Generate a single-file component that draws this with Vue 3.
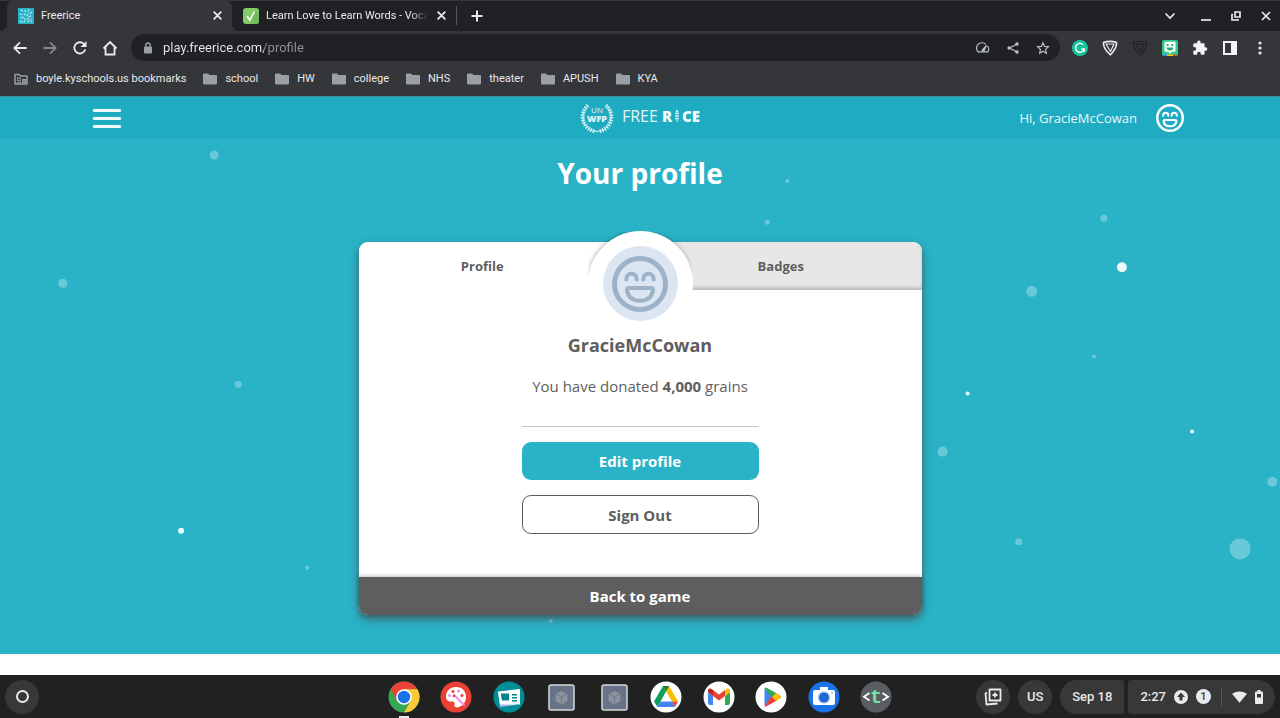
<template>
  <div class="desktop">
    <div class="tabstrip">
      <div class="tab active">
        <svg class="favicon" viewBox="0 0 16 16">
          <rect width="16" height="16" fill="#27b0c6" />
          <g stroke="#d6f3f7" stroke-width="1.1" stroke-linecap="round" opacity=".85">
            <path d="M3 2l1.500 1M7 2l.5 2M11 1.500l-1 2M14 4l-2 1.500M2 6l2 .5M6 6l1.500 1M10 6l-1 2M13 8l-2 .5M3 10l2-1M6 10l1 1.500M9 11l1.500-1M13 11l-1 1M2 13l2 1M6 14l1-1M10 14l.5-1.500M14 14l-1-.5" />
          </g>
        </svg>
        <span class="tab-title">Freerice</span>
        <button class="close" type="button" aria-label="Close tab">
          <svg viewBox="0 0 10 10"><path d="M1.500 1.500l7 7M8.500 1.500l-7 7" /></svg>
        </button>
      </div>
      <div class="tab">
        <svg class="favicon" viewBox="0 0 16 16">
          <rect width="16" height="16" rx="3" fill="#83c967" />
          <path d="M8 16h5a3 3 0 0 0 3-3V5l-4-2z" fill="#74b95b" />
          <path d="M4 8l2.800 4L11.500 3.500" fill="none" stroke="#fff" stroke-width="1.500" />
        </svg>
        <span class="tab-title faded">Learn Love to Learn Words - Voca</span>
        <button class="close" type="button" aria-label="Close tab">
          <svg viewBox="0 0 10 10"><path d="M1.500 1.500l7 7M8.500 1.500l-7 7" /></svg>
        </button>
      </div>
      <span class="tab-divider"></span>
      <button class="new-tab" type="button" aria-label="New tab">
        <svg viewBox="0 0 12 12"><path d="M6 .5v11M.5 6h11" /></svg>
      </button>
      <div class="window-controls">
        <button type="button" aria-label="Search tabs">
          <svg viewBox="0 0 16 16"><path d="M3.500 5.500L8 10l4.500-4.500" /></svg>
        </button>
        <button type="button" aria-label="Minimize">
          <svg viewBox="0 0 16 16"><path d="M3 12h10" /></svg>
        </button>
        <button type="button" aria-label="Restore">
          <svg viewBox="0 0 16 16"><path d="M7 4h5v5H7zM5 6.500H4V12h6v-1" /></svg>
        </button>
        <button type="button" aria-label="Close">
          <svg viewBox="0 0 16 16"><path d="M4 4l8 8M12 4l-8 8" /></svg>
        </button>
      </div>
    </div>

    <div class="toolbar">
      <button type="button" aria-label="Back">
        <svg viewBox="0 0 16 16"><path d="M14.500 8H2.500M8 2.300L2.300 8 8 13.700" /></svg>
      </button>
      <button type="button" aria-label="Forward" class="dim">
        <svg viewBox="0 0 16 16"><path d="M1.500 8h12M8 2.300L13.700 8 8 13.700" /></svg>
      </button>
      <button type="button" aria-label="Reload">
        <svg viewBox="0 0 16 16"><path d="M13.300 9.500A5.600 5.600 0 1 1 12 4l1.500 1.500" /><path d="M14.500 1v6h-6z" fill="#e8eaed" stroke="none" /></svg>
      </button>
      <button type="button" aria-label="Home">
        <svg viewBox="0 0 16 16"><path d="M1.500 8.500L8 2l6.500 6.500M3.500 7v7.500h9V7" /></svg>
      </button>
      <div class="omnibox">
        <svg class="lock" viewBox="0 0 10 12">
          <rect x="1" y="4.500" width="8" height="7" rx="1" fill="#9aa0a6" />
          <path d="M2.800 5V3.200a2.200 2.200 0 0 1 4.400 0V5" fill="none" stroke="#9aa0a6" stroke-width="1.300" />
        </svg>
        <input v-model="address" class="url" type="text" aria-label="Address" spellcheck="false" />
        <button type="button" aria-label="Performance">
          <svg viewBox="0 0 16 16"><path d="M13 5.500a6 6 0 0 1 .5 7H2.500A6 6 0 0 1 11 3.700" /><path d="M7 10.500l5-5.500-3 6.500z" fill="#bdc1c6" /></svg>
        </button>
        <button type="button" aria-label="Share">
          <svg viewBox="0 0 16 16"><path d="M12.500 3.300L4 8l8.500 4.700" /><g fill="#bdc1c6" stroke="none"><circle cx="12.500" cy="3.300" r="2" /><circle cx="3.600" cy="8" r="2" /><circle cx="12.500" cy="12.700" r="2" /></g></svg>
        </button>
        <button type="button" aria-label="Bookmark this tab">
          <svg viewBox="0 0 16 16"><path d="M8 2l1.800 4.200 4.500.4-3.400 3 1 4.400L8 11.700 4.100 14l1-4.400-3.400-3 4.500-.4z" /></svg>
        </button>
      </div>
      <button type="button" aria-label="Grammar">
        <svg viewBox="0 0 16 16"><circle cx="8" cy="8" r="8" fill="#15c39a" stroke="none" /><path d="M11 4.600A4.400 4.400 0 1 0 12.200 9H9.200M12.200 8.500v3.300" stroke="#fff" stroke-width="1.400" /></svg>
      </button>
      <button type="button" aria-label="Shield">
        <svg viewBox="0 0 16 16"><path d="M1.500 2.500Q8 .3 14.500 2.500 15 8 8.500 14.800 1 9 1.500 2.500z" stroke-width="1.600" stroke-linejoin="round" /><path d="M4 4h8L8.500 11.500z" stroke-width="1.200" stroke-linejoin="round" /></svg>
      </button>
      <button type="button" aria-label="Shield, off" class="dark">
        <svg viewBox="0 0 16 16"><path d="M1.500 2.500Q8 .3 14.500 2.500 15 8 8.500 14.800 1 9 1.500 2.500z" stroke-width="1.300" stroke-linejoin="round" /><path d="M4 4h8L8.500 11.500z" stroke-width="1.200" stroke-linejoin="round" /></svg>
      </button>
      <button type="button" aria-label="Sticker chat">
        <svg viewBox="0 0 16 16">
          <g stroke="none">
            <rect width="16" height="16" rx="2" fill="#2fc98d" />
            <path d="M1 14.500h4V16H2z" fill="#4285f4" />
            <path d="M5 14.500h6V16H5z" fill="#fbbc04" />
            <path d="M11 14.500h4L14 16h-3z" fill="#ea4335" />
            <path d="M3.500 1.800h9q1 0 1 1v8q0 1-1 1h-3L8 14l-1.500-2.200h-3q-1 0-1-1v-8q0-1 1-1z" fill="#fff" />
            <path d="M4.800 4h1.700v2H4.800zM9.500 4h1.700v2H9.500zM4.500 7.500h7Q11 10.500 8 10.500T4.500 7.500z" fill="#22a873" />
          </g>
        </svg>
      </button>
      <button type="button" aria-label="Extensions">
        <svg viewBox="0 0 16 16"><path d="M13.600 7.300h-1V4.600c0-.8-.6-1.300-1.300-1.300H8.600v-1a1.700 1.700 0 0 0-3.400 0v1H2.600c-.8 0-1.300.6-1.300 1.300v2.500h1a1.800 1.800 0 0 1 0 3.700h-1v2.600c0 .7.600 1.300 1.300 1.300h2.500v-1a1.800 1.800 0 0 1 3.700 0v1h2.500c.7 0 1.300-.6 1.300-1.300v-2.700h1a1.700 1.700 0 0 0 0-3.400z" fill="#f1f3f4" stroke="none" /></svg>
      </button>
      <button type="button" aria-label="Side panel">
        <svg viewBox="0 0 16 16"><path d="M1 1h14v14H1zM3 3v10h6V3z" fill="#f1f3f4" fill-rule="evenodd" stroke="none" /></svg>
      </button>
      <button type="button" aria-label="Menu">
        <svg viewBox="0 0 16 16"><g fill="#e8eaed" stroke="none"><circle cx="8" cy="3" r="1.600" /><circle cx="8" cy="8" r="1.600" /><circle cx="8" cy="13" r="1.600" /></g></svg>
      </button>
    </div>

    <nav class="bookmarks" aria-label="Bookmarks">
      <a v-for="(name, i) in bookmarks" :key="name" href="#">
        <svg viewBox="0 0 14 12">
          <template v-if="i === 0">
            <path d="M1 1.500h4l1.500 1.500H13v8H1z" fill="none" stroke="#9aa0a6" stroke-width="1.500" stroke-linejoin="round" />
            <path d="M3 4.500h4v5.500H3zM8 6h4v4H8z" fill="#9aa0a6" />
            <path d="M3 6.500h4M3 8.500h4M5 4.500V10M9 8h2" stroke="#35363a" stroke-width=".7" />
          </template>
          <path v-else d="M0 1.500Q0 .5 1 .5h4L6.500 2H13q1 0 1 1v7.500q0 1-1 1H1q-1 0-1-1z" fill="#9aa0a6" />
        </svg>
        {{ name }}
      </a>
    </nav>

    <main class="page">
      <header class="site-header">
        <div class="header-inner">
          <button class="hamburger" type="button" aria-label="Menu">
            <span></span><span></span><span></span>
          </button>
          <a class="logo" href="#" aria-label="Freerice home">
            <svg class="emblem" viewBox="0 0 34 30">
              <g fill="none" stroke="#d8f2f5">
                <path d="M8 2.500A14.800 14.800 0 0 0 17 28.500M26 2.500A14.800 14.800 0 0 1 17 28.500" stroke-width="1" />
                <path d="M8 2.500A14.800 14.800 0 0 0 15.500 28.500M26 2.500A14.800 14.800 0 0 1 18.500 28.500" stroke-width="4" stroke-dasharray="1.400 1.200" />
              </g>
              <text x="17" y="10" class="un">UN</text>
              <text x="17" y="19" class="wfp">WFP</text>
            </svg>
            <span class="free">FREE</span>
            <span class="rice">
              R
              <svg viewBox="0 0 4 12"><g fill="#d8f2f5"><circle cx="2" cy="1.200" r="1.200" /><circle cx="1" cy="3.500" r="1" /><circle cx="3" cy="3.500" r="1" /><circle cx="1" cy="6" r="1" /><circle cx="3" cy="6" r="1" /><circle cx="1" cy="8.500" r="1" /><circle cx="3" cy="8.500" r="1" /><path d="M1.500 9h1v3h-1z" /></g></svg>
              CE
            </span>
          </a>
          <a class="account" href="#">
            Hi, GracieMcCowan
            <svg class="face" viewBox="0 0 56 56">
              <circle cx="28" cy="28" r="25.500" />
              <path d="M14.300 23.500v-.6a5.200 5.200 0 0 1 10.400 0v.6M31.300 23.500v-.6a5.200 5.200 0 0 1 10.400 0v.6" />
              <path d="M17 32h22q2 0 2 2-1.500 10.700-13 10.700T15 34q0-2 2-2z" />
            </svg>
          </a>
        </div>
      </header>

      <section class="hero">
        <svg class="bubbles" viewBox="0 0 1280 514" preserveAspectRatio="xMidYMin slice">
          <circle v-for="(b, i) in bubbles" :key="i" :cx="b[0]" :cy="b[1]" :r="b[2]" :opacity="b[3]" fill="#fff" />
        </svg>
        <h1>Your profile</h1>
        <div class="card">
          <div class="tabs" role="tablist">
            <button
              v-for="t in tabs"
              :key="t"
              type="button"
              role="tab"
              :class="{ selected: t === current }"
              :aria-selected="t === current"
              @click="current = t"
            >
              {{ t }}
            </button>
          </div>
          <div class="halo"></div>
          <div class="avatar">
            <svg class="face" viewBox="0 0 56 56">
              <circle cx="28" cy="28" r="25.500" />
              <path d="M14.300 23.500v-.6a5.200 5.200 0 0 1 10.400 0v.6M31.300 23.500v-.6a5.200 5.200 0 0 1 10.400 0v.6" />
              <path d="M17 32h22q2 0 2 2-1.500 10.700-13 10.700T15 34q0-2 2-2z" />
            </svg>
          </div>
          <div class="content">
            <h2>GracieMcCowan</h2>
            <p>You have donated <strong>4,000</strong> grains</p>
            <hr />
            <button class="edit" type="button">Edit profile</button>
            <button class="signout" type="button">Sign Out</button>
          </div>
          <button class="back" type="button">Back to game</button>
        </div>
      </section>
    </main>

    <footer class="shelf">
      <button class="launcher" type="button" aria-label="Launcher"><span></span></button>
      <div class="apps">
        <button type="button" aria-label="Chrome" class="running">
          <svg viewBox="0 0 32 32">
            <circle cx="16" cy="16" r="15.500" fill="#34a853" />
            <path d="M2.600 8.200A15.500 15.500 0 0 1 29.400 8.200H16L9.300 20z" fill="#ea4335" />
            <path d="M29.400 8.200A15.500 15.500 0 0 1 16 31.500L22.700 20 16 8.200z" fill="#fbc934" />
            <circle cx="16" cy="16" r="7.800" fill="#fff" />
            <circle cx="16" cy="16" r="6.200" fill="#1a73e8" />
          </svg>
        </button>
        <button type="button" aria-label="Canvas">
          <svg viewBox="0 0 32 32">
            <circle cx="16" cy="16" r="15.500" fill="#e94235" />
            <path d="M16 6C9.500 6 6 10.500 6 15.500c0 4 2.500 5.500 5 5 2.500-.5 4 .5 3.500 3C14 26 16 27 19 26c4.500-1.500 7-5.500 7-10C26 10 22 6 16 6z" fill="#fff" />
            <path d="M14 14l10 10" stroke="#ee8df2" stroke-width="1.800" stroke-linecap="round" />
            <g fill="#e94235"><circle cx="13" cy="10.500" r="1.500" /><circle cx="22" cy="14.500" r="1.500" /><circle cx="14" cy="15" r="1.300" /></g>
            <g fill="#ee8df2"><circle cx="18.500" cy="10" r="1.500" /><circle cx="9.500" cy="14.500" r="1.500" /></g>
          </svg>
        </button>
        <button type="button" aria-label="News">
          <svg viewBox="0 0 32 32">
            <circle cx="16" cy="16" r="15.500" fill="#008f96" />
            <path d="M5 11l18 13-16 2z" fill="#a9b9ee" />
            <path d="M5 10.500l22-2.500v15.500H7z" fill="#fff" />
            <path d="M8 12.500h8v7H9q-1-3-1-7zM19 13h5v1.500h-5zM19 16h5v1.500h-5zM19 19h5v1.500h-5z" fill="#00838a" />
          </svg>
        </button>
        <button v-for="n in 2" :key="n" type="button" aria-label="App">
          <svg viewBox="0 0 32 32">
            <rect x="4" y="4" width="25" height="25" rx="2" fill="#687388" stroke="#d5d7da" stroke-width="1.500" />
            <path d="M16.500 10l6 3v7l-6 3.500-6-3.500v-7z" fill="#8d939c" />
            <path d="M10.500 13l6 3 6-3M16.500 16v7.500" fill="none" stroke="#707a8b" stroke-width="1" />
          </svg>
        </button>
        <button type="button" aria-label="Drive">
          <svg viewBox="0 0 32 32">
            <circle cx="16" cy="16" r="15.500" fill="#fff" />
            <path d="M13 5h6l9 15.500h-6z" fill="#fbbc04" />
            <path d="M13 5l3 5.500L7.500 26 4 20.500z" fill="#0f9d58" />
            <path d="M13 5h6l-3 5.500z" fill="#188038" />
            <path d="M10.500 20.500h11.500l3 5.500H7.500z" fill="#4285f4" />
            <path d="M22 20.500h6L25 26z" fill="#ea4335" />
          </svg>
        </button>
        <button type="button" aria-label="Gmail">
          <svg viewBox="0 0 32 32">
            <circle cx="16" cy="16" r="15.500" fill="#fff" />
            <path d="M5 11l5 4v9H7q-2 0-2-2z" fill="#4285f4" />
            <path d="M27 11l-5 4v9h3q2 0 2-2z" fill="#34a853" />
            <path d="M10 9l6 4.500L22 9v6l-6 4.500-6-4.500z" fill="#ea4335" />
            <path d="M5 11V9.500Q5 7 7.500 7.500L10 9v6z" fill="#c5221f" />
            <path d="M27 11V9.500q0-2.500-2.500-2L22 9v6z" fill="#fbbc04" />
          </svg>
        </button>
        <button type="button" aria-label="Play Store">
          <svg viewBox="0 0 32 32">
            <circle cx="16" cy="16" r="15.500" fill="#fff" />
            <path d="M9.500 7v18l9-9z" fill="#4285f4" />
            <path d="M9.500 7q1-1 2.500 0l10 5.500-5 5z" fill="#34a853" />
            <path d="M9.500 25q1 1 2.500 0l10-5.500-5-5z" fill="#ea4335" />
            <path d="M21 12l4.500 2.800q1.500 1.200 0 2.400L21 20l-4-4z" fill="#fbbc04" />
          </svg>
        </button>
        <button type="button" aria-label="Camera">
          <svg viewBox="0 0 32 32">
            <circle cx="16" cy="16" r="15.500" fill="#1a73e8" />
            <path d="M12 6h8v3h5q2 0 2 2v11q0 2-2 2H7q-2 0-2-2V11q0-2 2-2h5z" fill="#fff" />
            <circle cx="16" cy="16.500" r="6" fill="#8ab4f8" />
            <circle cx="16" cy="16.500" r="4.800" fill="#1967d2" />
            <circle cx="24" cy="12" r="1" fill="#8ab4f8" />
          </svg>
        </button>
        <button type="button" aria-label="Text editor">
          <svg viewBox="0 0 32 32">
            <circle cx="16" cy="16" r="15.500" fill="#5a5e63" />
            <path d="M9.500 12L4 15.700l5.500 3.800M22.500 12l5.500 3.700-5.500 3.800" fill="none" stroke="#fff" stroke-width="1.800" />
            <text x="16" y="22" class="editor-t">t</text>
          </svg>
        </button>
      </div>
      <div class="tray">
        <button class="round" type="button" aria-label="Screen captures">
          <svg viewBox="0 0 18 18"><g fill="none" stroke="#e8eaed" stroke-width="1.800" stroke-linejoin="round"><path d="M5.500 1.500h11v11h-11zM3 4.500l-1.500 1 1 11 11-1M11 4.500v5M8.500 7h5" /></g></svg>
        </button>
        <button class="round" type="button">US</button>
        <button class="date" type="button">Sep 18</button>
        <button class="status" type="button">
          <span>2:27</span>
          <svg class="update" viewBox="0 0 14 14"><circle cx="7" cy="7" r="7" fill="#e8eaed" /><path d="M7 2.500L11 7H8.500v3.500h-3V7H3z" fill="#3a3a3a" /></svg>
          <span class="count">1</span>
          <span class="rule"></span>
          <svg class="wifi" viewBox="0 0 16 12"><path d="M0 2.500Q8-2.500 16 2.500L8 12z" fill="#e8eaed" /></svg>
          <svg class="battery" viewBox="0 0 8 14"><path d="M2.500 0h3v1.500H7q1 0 1 1V13q0 1-1 1H1q-1 0-1-1V2.500q0-1 1-1h1.500zM2 4v3.500h4V4z" fill="#e8eaed" fill-rule="evenodd" /></svg>
        </button>
      </div>
    </footer>
  </div>
</template>

<script setup>
import { ref } from 'vue'

const address = ref('play.freerice.com/profile')
const bookmarks = ['boyle.kyschools.us bookmarks', 'school', 'HW', 'college', 'NHS', 'theater', 'APUSH', 'KYA']

const tabs = ['Profile', 'Badges']
const current = ref('Profile')

// x, y, radius, opacity
const bubbles = [
  [215, 16, 4.5, 0.3],
  [64, 144, 4.5, 0.3],
  [239, 245, 3.5, 0.3],
  [182, 391, 3, 0.9],
  [308, 428, 2, 0.3],
  [551, 481, 2, 0.3],
  [787, 42, 2, 0.3],
  [767, 83, 2.5, 0.3],
  [1103, 79, 3.5, 0.3],
  [1121, 128, 5, 0.9],
  [1031, 152, 5.5, 0.3],
  [1093, 217, 2, 0.3],
  [967, 254, 2, 0.9],
  [1191, 292, 2, 0.9],
  [942, 312, 5, 0.3],
  [1271, 342, 5, 0.3],
  [1239, 409, 10.5, 0.3],
  [1018, 402, 3.5, 0.3]
]
</script>

<style>
body { background: #fff; }
</style>

<style scoped>
.desktop {
  display: flex;
  flex-direction: column;
  min-height: 100vh;
  font-family: Roboto, sans-serif;
  font-size: 11px;
  color: #e8eaed;
}
button {
  appearance: none;
  border: none;
  background: none;
  padding: 0;
  font: inherit;
  color: inherit;
  cursor: pointer;
}
a { color: inherit; text-decoration: none; }
svg { display: block; flex: none; }

.tabstrip {
  display: flex;
  align-items: center;
  height: 31px;
  padding-left: 7px;
  background: #202124;
  box-shadow: inset 0 1px #35363a;
}
.tab {
  display: flex;
  align-items: center;
  box-sizing: border-box;
  width: 224px;
  height: 31px;
  padding: 0 9px 0 11px;
}
.tab.active {
  position: relative;
  width: 225px;
  background: #35363a;
  border-radius: 8px 8px 0 0;
}
.tab.active::before,
.tab.active::after {
  content: '';
  position: absolute;
  bottom: 0;
  width: 7px;
  height: 7px;
}
.tab.active::before { right: 100%; background: radial-gradient(circle at 0 0, transparent 7px, #35363a 7px); }
.tab.active::after { left: 100%; background: radial-gradient(circle at 100% 0, transparent 7px, #35363a 7px); }
.favicon { width: 16px; height: 16px; }
.tab-title {
  flex: 1;
  min-width: 0;
  margin-left: 7px;
  white-space: nowrap;
}
.faded { mask-image: linear-gradient(90deg, #000 88%, transparent 99%); }
.close { width: 11px; height: 11px; margin-left: 6px; }
.close svg { width: 11px; height: 11px; }
.close path,
.new-tab path { fill: none; stroke: #e8eaed; stroke-width: 1.6; }
.new-tab path { stroke-width: 2; }
.tab-divider { width: 1px; height: 19px; background: #55575b; }
.new-tab { width: 12px; margin-left: 14px; }
.new-tab svg { width: 12px; height: 12px; }
.window-controls { display: flex; gap: 14px; margin-left: auto; padding-right: 6px; }
.window-controls button:first-child { margin-right: 6px; }
.window-controls svg { width: 16px; height: 16px; fill: none; stroke: #e8eaed; stroke-width: 1.7; }

.toolbar {
  display: flex;
  align-items: center;
  height: 33px;
  padding: 0 5px;
  background: #35363a;
}
.toolbar button {
  display: flex;
  align-items: center;
  justify-content: center;
  width: 30px;
  height: 27px;
}
.toolbar button svg { width: 16px; height: 16px; fill: none; stroke: #e8eaed; stroke-width: 1.8; }
.toolbar .dim svg { stroke: #85878a; }
.toolbar .dark svg { stroke: #202124; }
.omnibox {
  display: flex;
  flex: 1;
  align-items: center;
  height: 27px;
  margin: 0 5px 0 6px;
  padding: 0 2px 0 12px;
  border-radius: 14px;
  background: #202124;
}
.toolbar .omnibox button svg { width: 14px; height: 14px; stroke: #bdc1c6; stroke-width: 1.3; }
.lock { width: 10px; height: 12px; }
.url {
  flex: 1;
  min-width: 0;
  margin-left: 10px;
  padding: 0;
  border: none;
  outline: none;
  font: 13px Roboto, sans-serif;
  color: transparent;
  /* host stays bright, path is dimmed */
  background: linear-gradient(90deg, #e8eaed 101px, #8d9094 101px);
  background-clip: text;
}

.bookmarks {
  display: flex;
  align-items: center;
  gap: 17px;
  height: 29px;
  padding: 0 14px 3px;
  background: #35363a;
}
.bookmarks a { display: flex; align-items: center; gap: 8px; }
.bookmarks svg { width: 14px; height: 12px; }

.page {
  display: flex;
  flex: 1;
  flex-direction: column;
  padding-bottom: 21px;
  background: #fff;
  font-family: 'Open Sans', sans-serif;
}
.site-header { background: #1fabc1; border-top: 1px solid #3f8d9a; }
.header-inner {
  display: grid;
  grid-template-columns: 1fr auto 1fr;
  align-items: center;
  max-width: 1094px;
  height: 42px;
  margin: 0 auto;
}
.hamburger { display: grid; gap: 5px; width: 28px; }
.hamburger span { height: 3px; border-radius: 1px; background: #eefafb; }
.logo { display: flex; align-items: center; font-size: 15px; line-height: 20px; color: #e2f6f8; }
.emblem { width: 34px; height: 30px; margin-right: 8px; }
.emblem text { fill: #e6f7f9; text-anchor: middle; font-size: 8px; }
.emblem .wfp { font-size: 9px; font-weight: 800; }
.free { padding-bottom: 4px; font-size: 16px; }
.rice {
  display: flex;
  align-items: center;
  gap: 3px;
  margin-left: 4px;
  padding-bottom: 4px;
  font-weight: 800;
  color: #f2fbfc;
}
.rice svg { width: 4px; height: 12px; }
.account {
  display: flex;
  align-items: center;
  justify-self: end;
  gap: 19px;
  margin-right: 3px;
  font-size: 13px;
  color: #eaf8fa;
}
.face { fill: none; stroke: currentColor; stroke-width: 4; stroke-linecap: round; stroke-linejoin: round; }
.face circle { stroke-width: 5; }
.account .face { width: 28px; height: 28px; color: #fff; }

.hero {
  position: relative;
  flex: 1;
  padding: 14px 16px 38px;
  background: #2ab2c7;
}
.bubbles { position: absolute; top: 0; left: 0; width: 100%; height: 100%; }
h1 {
  position: relative;
  margin: 0 0 49px;
  font-size: 28px;
  line-height: 40px;
  text-align: center;
  color: #fff;
}
.card {
  position: relative;
  display: flex;
  flex-direction: column;
  max-width: 563px;
  margin: 0 auto;
  border-radius: 9px;
  background: #fff;
  box-shadow: 0 4px 8px rgba(70, 60, 60, .7);
  color: #5e5e5e;
}
.tabs { display: grid; grid-template-columns: 1fr 1fr; height: 48px; }
.tabs button {
  padding: 0 34px 0 0;
  font-size: 13px;
  font-weight: 700;
  background: #e7e7e7;
  box-shadow: inset 0 -3px 4px -1px #b5b5b5;
  border-radius: 9px 0 0 0;
}
.tabs button:last-child { padding: 0; border-radius: 0 9px 0 0; }
.tabs .selected { background: #fff; box-shadow: none; }
/* shadow behind the avatar, fading out towards the card body */
.halo {
  position: absolute;
  top: -10px;
  left: 50%;
  width: 104px;
  height: 104px;
  margin-left: -52px;
  border-radius: 50%;
  box-shadow: 0 0 5px rgba(0, 0, 0, .5);
  mask-image: linear-gradient(#000 20%, transparent 55%);
  mask-clip: no-clip;
  mask-repeat: no-repeat;
  mask-size: 100% 100%;
}
.avatar {
  position: relative;
  display: flex;
  align-items: center;
  justify-content: center;
  align-self: center;
  width: 75px;
  height: 75px;
  margin-top: -44px;
  border-radius: 50%;
  background: #dce6f3;
  box-shadow: 0 0 0 15px #fff;
  color: #9db2c7;
}
.avatar .face { width: 56px; height: 56px; }
.content {
  position: relative;
  display: flex;
  flex-direction: column;
  align-self: center;
  width: 237px;
  padding: 11px 0 43px;
  text-align: center;
}
h2 { margin: 0; font-size: 18px; line-height: 26px; }
p { margin: 16px 0 28px; font-size: 15px; line-height: 24px; white-space: nowrap; }
hr { width: 100%; margin: 0 0 15px; border: none; border-top: 1px solid #c4c4c4; }
.edit,
.signout,
.back { font-size: 15px; font-weight: 700; }
.edit { height: 38px; border-radius: 9px; background: #2ab2c7; color: #fff; }
.signout { height: 39px; margin-top: 15px; border: 1px solid #5e5e5e; border-radius: 9px; }
.back {
  height: 38px;
  border-radius: 0 0 9px 9px;
  background: #5e5e5e;
  color: #fff;
  box-shadow: 0 -1px 4px rgba(0, 0, 0, .25);
}

.shelf {
  display: grid;
  grid-template-columns: 1fr auto 1fr;
  align-items: center;
  box-sizing: border-box;
  height: 43px;
  padding: 0 5px;
  background: #212121;
  font-size: 13px;
  font-weight: 500;
}
.launcher {
  display: flex;
  align-items: center;
  justify-content: center;
  width: 34px;
  height: 34px;
  border-radius: 50%;
  background: #383838;
}
.launcher span { width: 9px; height: 9px; border: 2px solid #e8eaed; border-radius: 50%; }
.apps { display: flex; justify-content: space-between; width: 504px; }
.apps button { position: relative; }
.apps svg { width: 32px; height: 32px; }
.running::after {
  content: '';
  position: absolute;
  bottom: -5px;
  left: 11px;
  width: 10px;
  height: 2px;
  background: #e8eaed;
}
.editor-t { fill: #6fe3a6; font: 700 20px 'Liberation Mono', monospace; text-anchor: middle; }
.tray { display: flex; justify-self: end; gap: 8px; }
.tray button {
  display: flex;
  align-items: center;
  justify-content: center;
  height: 34px;
  background: #383838;
}
.tray .round { width: 34px; border-radius: 50%; }
.round svg { width: 18px; height: 18px; }
.tray .date { padding: 0 12px; border-radius: 17px 3px 3px 17px; }
.tray .status { gap: 8px; margin-left: -4px; padding: 0 12px; border-radius: 3px 17px 17px 3px; }
.update { width: 14px; height: 14px; }
.count {
  width: 15px;
  height: 15px;
  border-radius: 50%;
  background: #e8eaed;
  color: #383838;
  font-size: 11px;
  line-height: 15px;
}
.rule { width: 1px; height: 19px; margin: 0 2px; background: #55575b; }
.wifi { width: 15px; height: 12px; }
.battery { width: 8px; height: 14px; }
</style>
